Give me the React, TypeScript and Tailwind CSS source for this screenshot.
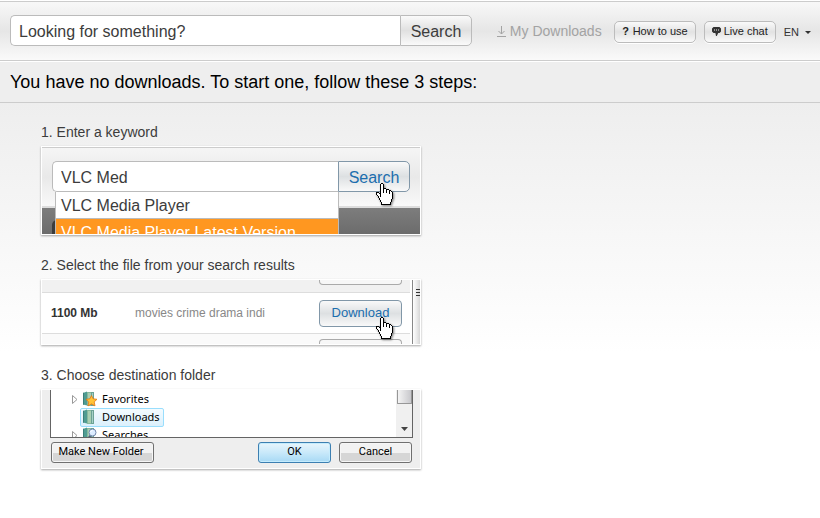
import type { ReactNode } from 'react';

const HAND = [
  '.....XX..........',
  '....XooX.........',
  '....XooX.........',
  '....XooX.........',
  '....XooX.........',
  '....XooXXX.......',
  '....XooXooXXX....',
  '....XooXooXooXX..',
  '....XooXooXooXoX.',
  'XXX.XooXooXooXooX',
  'XooXXooooooooXooX',
  'XoooXoooooooooooX',
  '.XooXoooooooooooX',
  '..XoXoooooooooooX',
  '..XoooooooooooooX',
  '...XooooooooooooX',
  '...XoooooooooooX.',
  '....XooooooooooX.',
  '....XooooooooooX.',
  '.....XooooooooX..',
  '.....XooooooooX..',
  '.....XXXXXXXXXX..',
];

function HandCursor() {
  return (
    <svg
      width="17"
      height="22"
      viewBox="0 0 17 22"
      shapeRendering="crispEdges"
      className="h-[22px] w-[17px] drop-shadow-[1px_1px_1px_rgba(0,0,0,0.5)]"
      aria-hidden="true"
    >
      {HAND.flatMap((row, y) =>
        [...row].map((c, x) =>
          c === '.' ? null : (
            <rect key={`${x}-${y}`} x={x} y={y} width="1" height="1" fill={c === 'X' ? '#000' : '#fff'} />
          ),
        ),
      )}
    </svg>
  );
}

function DownloadIcon() {
  return (
    <svg width="9" height="11" viewBox="0 0 9 11" fill="none" stroke="#a3a3a3" aria-hidden="true">
      <path d="M4.5 0v8M1.5 5l3 3 3-3M0 10.5h9" />
    </svg>
  );
}

function ChatIcon() {
  return (
    <svg width="9" height="9" viewBox="0 0 9 9" aria-hidden="true">
      <path d="M1.5 0h6L9 1.5v3L7.5 6H6.2L4.8 9H4L3.4 6H1.5L0 4.5v-3z" fill="#333" />
      <path d="M2 2.5h1v1H2zM4 2.5h1v1H4zM6 2.5h1v1H6z" fill="#eee" />
    </svg>
  );
}

function FolderIcon({ mark }: { mark?: 'star' | 'lens' }) {
  return (
    <svg width="16" height="16" viewBox="0 0 16 16" className="shrink-0" aria-hidden="true">
      <path d="M1 2l4-1.5v14L1 13.5z" fill="#4f9c92" />
      <path d="M1 2l1-.4v12.2l-1-.3z" fill="#3b7f79" />
      <path d="M5 1h7v14H5z" fill="#86b89c" />
      <path d="M6 2h3v12H6z" fill="#a9cfb3" />
      <path d="M9 1h3v14H9z" fill="#6ba295" />
      <path d="M10 2h1v12h-1z" fill="#a6d0c6" />
      {mark === 'star' && (
        <path
          d="M9.5 4.500l1.600 3.300 3.900.5-2.800 2.600.8 4-3.500-2-3.500 2 .8-4L4 8.300l3.900-.5z"
          fill="#ffc43a"
          stroke="#e47512"
          strokeWidth=".8"
        />
      )}
      {mark === 'lens' && (
        <>
          <path d="M8.500 8.500L5 13" stroke="#4c6180" strokeWidth="2" />
          <circle cx="10.500" cy="5.500" r="3.500" fill="#dcecff" stroke="#7288ad" />
          <path d="M8.500 5a2 2 0 0 1 2-1.500" stroke="#fff" fill="none" />
        </>
      )}
    </svg>
  );
}

function PillButton({ icon, children }: { icon: ReactNode; children: ReactNode }) {
  return (
    <button
      type="button"
      className="flex h-[22px] items-center gap-[3px] rounded-[5px] border border-[#bcbcbc] bg-linear-to-b from-[#fafafa] via-[#e2e2e2] to-[#fafafa] px-[7px] text-[11px] font-medium text-[#222] shadow-[0_1px_0_#fff]"
    >
      {icon}
      {children}
    </button>
  );
}

function Step({ n, title, children }: { n: number; title: string; children: ReactNode }) {
  return (
    <li>
      <h2 className="text-[14px] leading-[18px] text-[#3c3c3c]">
        {n}. {title}
      </h2>
      <div className="relative mt-[5px] max-w-[380px] border border-white bg-white shadow-[0_1px_2px_rgba(0,0,0,0.35)]">
        {children}
      </div>
    </li>
  );
}

function KeywordDemo() {
  return (
    <>
      <div className="relative h-[87px] overflow-hidden bg-linear-to-b from-[#7d7d7d] from-70% to-[#6c6c6c]">
        <div className="h-[61px] border-t border-b-2 border-t-[#ccc] border-b-[#ddd] bg-linear-to-b from-[#f5f5f5] via-[#e9e9e9] to-[#f9f9f9] px-[10px] pt-[13px]">
          <form className="flex h-[31px]" onSubmit={(e) => e.preventDefault()}>
            <input
              type="text"
              aria-label="Keyword"
              defaultValue="VLC Med"
              className="w-0 flex-1 rounded-l-[5px] border border-r-0 border-[#bbb] bg-white px-2 pt-[2px] text-[16px] text-[#3c3c3c] outline-none"
            />
            <button
              type="button"
              className="w-[72px] rounded-r-[5px] border border-[#8197a8] bg-linear-to-b from-[#f9f9f9] via-[#dde0e2] to-[#f9f9f9] pt-[2px] text-[16px] text-[#1b6eae]"
            >
              Search
            </button>
          </form>
        </div>
        <div className="absolute top-[73px] left-[10px] h-5 w-5 rounded-tl-[5px] bg-[#3c3c3c]" />
        <ul className="absolute top-[45px] right-[81px] left-[13px] border-x border-[#bbb] bg-white text-[16px] leading-[24px] text-[#3c3c3c]">
          <li className="border-b border-[#bbb] px-[5px] pt-[2px]">VLC Media Player</li>
          <li className="bg-[#ff9720] px-[5px] pt-[2px] text-white">VLC Media Player Latest Version</li>
        </ul>
      </div>
      <div className="absolute top-[36px] right-[27px]">
        <HandCursor />
      </div>
    </>
  );
}

function ResultsDemo() {
  return (
    <>
      <div className="flex h-[64px] overflow-hidden">
        <div className="min-w-0 flex-1 pr-[2px]">
          <div className="flex h-[13px] justify-end border-b border-[#ddd] bg-[#f1f1f1] pr-2">
            <div className="h-[5px] w-[83px] rounded-b-[4px] border border-t-0 border-[#aaa] bg-[#f7f7f7]" />
          </div>
          <div className="flex h-[41px] items-center border-b border-[#ddd] pr-2 pl-[9px]">
            <b className="w-[84px] text-[12px] text-[#333]">1100 Mb</b>
            <span className="flex-1 text-[12px] text-[#888]">movies crime drama indi</span>
            <button
              type="button"
              className="h-[27px] w-[83px] rounded-[4px] border border-[#8197a8] bg-linear-to-b from-[#f9f9f9] via-[#dde0e2] to-[#f9f9f9] text-[13px] text-[#1b6eae]"
            >
              Download
            </button>
          </div>
          <div className="flex h-[10px] items-end justify-end bg-[#fafafa] pr-2">
            <div className="h-[5px] w-[83px] rounded-t-[4px] border border-b-0 border-[#aaa] bg-[#f7f7f7]" />
          </div>
        </div>
        <div className="flex w-2 flex-col items-end gap-px border-l border-[#888] bg-linear-to-r from-white via-[#ececec] to-[#d6d6d6] pt-[9px]">
          <i className="h-[2px] w-1 border-t border-[#333]" />
          <i className="h-[2px] w-1 border-t border-[#333]" />
          <i className="h-[2px] w-1 border-t border-[#333]" />
        </div>
      </div>
      <div className="absolute top-[37px] right-[27px]">
        <HandCursor />
      </div>
    </>
  );
}

const FOLDERS = [
  { name: 'Favorites', mark: 'star' as const, expandable: true, selected: false },
  { name: 'Downloads', mark: undefined, expandable: false, selected: true },
  { name: 'Searches', mark: 'lens' as const, expandable: true, selected: false },
];

function FolderDemo() {
  return (
    <div className="bg-[#eee] pr-[7px] pb-[5px] pl-2 text-[11px] text-black">
      <div className="flex h-[48px] justify-between overflow-hidden border border-t-0 border-[#646464] bg-white font-['Noto_Sans',sans-serif]">
        <ul className="pl-[21px]">
          {FOLDERS.map((f) => (
            <li key={f.name} className="flex h-[18px] items-center">
              <span className="w-2 shrink-0">
                {f.expandable && (
                  <svg width="6" height="9" viewBox="0 0 6 9" fill="#fff" stroke="#999" aria-hidden="true">
                    <path d="M.5 .5v8l4.500-4z" />
                  </svg>
                )}
              </span>
              <span
                className={
                  f.selected
                    ? 'flex h-[19px] items-center gap-1 rounded-[2px] border border-[#99defd] bg-linear-to-b from-[#f4fbff] to-[#dbf0fc] pr-[3px] pl-px'
                    : 'flex h-[19px] items-center gap-1 border border-transparent pl-px'
                }
              >
                <FolderIcon mark={f.mark} />
                {f.name}
              </span>
            </li>
          ))}
        </ul>
        <div className="flex w-4 flex-col items-center justify-between bg-[#f0f0f0] pb-[6px]">
          <div className="h-[14px] w-[15px] rounded-b-[1px] border border-t-0 border-[#979797] bg-linear-to-r from-[#f4f4f4] to-[#c8c8cc]" />
          <svg width="7" height="4" viewBox="0 0 7 4" aria-hidden="true">
            <path d="M0 0h7L3.500 4z" fill="#444" />
          </svg>
        </div>
      </div>
      <div className="mt-1 flex gap-2 font-[Roboto,sans-serif]">
        <button
          type="button"
          className="mr-auto ml-px h-[21px] w-[103px] rounded-[3px] border border-[#707070] bg-linear-to-b from-[#f2f2f2] from-50% to-[#d6d6d6] to-50% pr-[3px] shadow-[inset_0_0_0_1px_#f6f6f6]"
        >
          Make New Folder
        </button>
        <button
          type="button"
          className="h-[21px] w-[73px] rounded-[3px] border border-[#3c7fb1] bg-linear-to-b from-[#e8f5fc] via-[#c9e9fa] to-[#a7d9f5] shadow-[inset_0_0_0_1px_#c5ecfd]"
        >
          OK
        </button>
        <button
          type="button"
          className="mr-px h-[21px] w-[73px] rounded-[3px] border border-[#707070] bg-linear-to-b from-[#f2f2f2] from-50% to-[#d6d6d6] to-50% shadow-[inset_0_0_0_1px_#f6f6f6]"
        >
          Cancel
        </button>
      </div>
    </div>
  );
}

export default function App() {
  return (
    <div className="min-h-screen bg-white pt-px font-['Liberation_Sans',Arial,sans-serif]">
      <header className="flex items-center justify-between border-y border-[#ccc] bg-linear-to-b from-[#f8f8f8] via-[#e6e6e6] to-[#fafafa] pt-[13px] pr-[9px] pb-[14px] pl-[10px]">
        <form className="flex h-[31px] w-[462px]" onSubmit={(e) => e.preventDefault()}>
          <input
            type="text"
            aria-label="Search"
            defaultValue="Looking for something?"
            className="w-0 flex-1 rounded-l-[5px] border border-r-0 border-[#bbb] bg-white px-2 pt-[2px] text-[16px] text-[#3c3c3c] outline-none"
          />
          <button
            type="button"
            className="w-[72px] rounded-r-[5px] border border-[#bbb] bg-linear-to-b from-[#fafafa] via-[#e0e0e0] to-[#fafafa] pt-[2px] text-[16px] text-[#3c3c3c]"
          >
            Search
          </button>
        </form>
        <nav className="flex items-center gap-2 pt-[2px]">
          <a href="#downloads" className="mr-1 flex items-center gap-1 text-[14px] text-[#a3a3a3]">
            <DownloadIcon />
            My Downloads
          </a>
          <PillButton icon={<b className="w-[8px]">?</b>}>How to use</PillButton>
          <PillButton icon={<ChatIcon />}>Live chat</PillButton>
          <button type="button" className="flex items-center gap-[6px] pt-[2px] text-[11px] text-[#333]">
            EN
            <svg width="6" height="3" viewBox="0 0 6 3" aria-hidden="true">
              <path d="M0 0h6L3 3z" fill="#333" />
            </svg>
          </button>
        </nav>
      </header>
      <h1 className="border-t border-b border-t-white border-b-[#ccc] bg-[#eee] px-[10px] text-[18px] leading-[40px] text-black">
        You have no downloads. To start one, follow these 3 steps:
      </h1>
      <main className="bg-linear-to-b from-[#eee] to-white to-[250px] px-[41px] pt-5 pb-12">
        <ol className="flex flex-col gap-[21px]">
          <Step n={1} title="Enter a keyword">
            <KeywordDemo />
          </Step>
          <Step n={2} title="Select the file from your search results">
            <ResultsDemo />
          </Step>
          <Step n={3} title="Choose destination folder">
            <FolderDemo />
          </Step>
        </ol>
      </main>
    </div>
  );
}
